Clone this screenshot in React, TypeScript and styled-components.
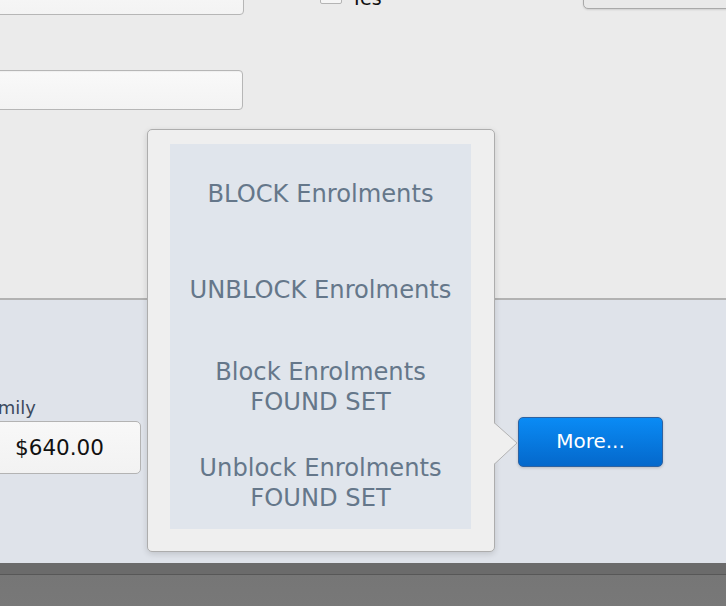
import React from "react";
import styled, { createGlobalStyle } from "styled-components";

const Global = createGlobalStyle`
  html, body { margin: 0; padding: 0; overflow: hidden; }
  body { font-family: "DejaVu Sans", Verdana, sans-serif; }
`;

const Page = styled.div`
  position: relative;
  width: 726px;
  height: 606px;
  display: flex;
  flex-direction: column;
  overflow: hidden;
`;

const TopSection = styled.section`
  height: 298px;
  flex: none;
  background: #ebebeb;
  border-bottom: 2px solid #b2b2b2;
  box-sizing: content-box;
  display: flex;
  flex-direction: column;
`;

const FieldRow = styled.div`
  display: flex;
  align-items: flex-end;
  height: 45px;
  margin-top: -30px;
`;

const TextField = styled.div<{ $width: number; $height: number; $offset?: number }>`
  box-sizing: border-box;
  width: ${(p) => p.$width}px;
  height: ${(p) => p.$height}px;
  margin-left: ${(p) => p.$offset ?? 0}px;
  flex: none;
  background: linear-gradient(#f9f9f9, #f3f3f3);
  border: 1px solid #b6b6b6;
  border-radius: 4px;
  box-shadow: inset 0 1px 1px rgba(0, 0, 0, 0.04);
`;

const CheckGroup = styled.label`
  display: flex;
  align-items: flex-end;
  gap: 9px;
  margin-left: 76px;
  margin-bottom: 11px;
`;

const CheckBox = styled.span`
  box-sizing: border-box;
  width: 22px;
  height: 22px;
  border: 1px solid #b4b4b4;
  border-radius: 2px;
  background: #f5f5f5;
`;

const CheckText = styled.span`
  font-size: 19px;
  line-height: 22px;
  color: #111;
  margin-bottom: -5px;
`;

const SideBox = styled.div`
  box-sizing: border-box;
  width: 160px;
  height: 40px;
  margin-left: auto;
  margin-right: -17px;
  margin-bottom: 6px;
  background: #e9e9e9;
  border: 1px solid #a9a9a9;
  border-radius: 5px;
  box-shadow: 0 1px 2px rgba(0, 0, 0, 0.12);
`;

const SecondField = styled(TextField)`
  margin-top: 55px;
`;

const BottomSection = styled.section`
  flex: 1;
  background: #dfe3ea;
  display: flex;
  align-items: flex-start;
  padding-top: 97px;
  box-sizing: border-box;
`;

const FieldColumn = styled.div`
  display: flex;
  flex-direction: column;
  gap: 2px;
  margin-left: -22px;
  width: 163px;
  flex: none;
`;

const FieldLabel = styled.span`
  font-size: 18px;
  line-height: 22px;
  color: #3c4a5e;
  white-space: nowrap;
`;

const MoneyField = styled.div`
  box-sizing: border-box;
  height: 53px;
  display: flex;
  align-items: center;
  justify-content: center;
  background: linear-gradient(#f8f8f8, #f2f2f2);
  border: 1px solid #b3b3b3;
  border-radius: 5px;
  font-size: 21.5px;
  color: #111;
`;

const MoreButton = styled.button`
  box-sizing: border-box;
  width: 145px;
  height: 50px;
  margin-top: 20px;
  margin-left: 377px;
  flex: none;
  border: 1px solid #2f62a0;
  border-radius: 5px;
  background: linear-gradient(#0a8bf5, #0468cb);
  color: #fff;
  font-family: "DejaVu Sans", Verdana, sans-serif;
  font-size: 20px;
  padding: 0 0 2px;
  box-shadow: 0 1px 3px rgba(0, 0, 0, 0.18);
  cursor: pointer;
`;

const Footer = styled.footer`
  height: 43px;
  flex: none;
  background: linear-gradient(
    to bottom,
    #6b6b6b 0,
    #6b6b6b 11px,
    #575757 11px,
    #575757 12px,
    #767676 12px,
    #787878 100%
  );
`;

const Popover = styled.div`
  position: absolute;
  left: 147px;
  top: 129px;
  width: 348px;
  height: 423px;
  box-sizing: border-box;
  padding: 14px 23px 22px 22px;
  background: #efefef;
  border: 1px solid #adadad;
  border-radius: 5px;
  box-shadow: 0 2px 6px rgba(0, 0, 0, 0.14);
`;

const MenuList = styled.div`
  height: 100%;
  background: #e0e5ec;
  display: grid;
  grid-template-rows: repeat(4, 1fr);
`;

const MenuItem = styled.div`
  display: flex;
  align-items: center;
  justify-content: center;
  text-align: center;
  padding-top: 4px;
  font-size: 24.2px;
  line-height: 30px;
  color: #65778a;
  cursor: pointer;
`;

const Arrow = styled.svg`
  position: absolute;
  left: 345px;
  top: 292px;
  overflow: visible;
`;

export default function App() {
  return (
    <>
      <Global />
      <Page>
        <TopSection>
          <FieldRow>
            <TextField $width={254} $height={40} $offset={-10} />
            <CheckGroup>
              <CheckBox />
              <CheckText>Yes</CheckText>
            </CheckGroup>
            <SideBox />
          </FieldRow>
          <SecondField $width={253} $height={40} $offset={-10} />
        </TopSection>
        <BottomSection>
          <FieldColumn>
            <FieldLabel>Family</FieldLabel>
            <MoneyField>$640.00</MoneyField>
          </FieldColumn>
          <MoreButton>More...</MoreButton>
        </BottomSection>
        <Footer />
        <Popover>
          <MenuList>
            <MenuItem>BLOCK Enrolments</MenuItem>
            <MenuItem>UNBLOCK Enrolments</MenuItem>
            <MenuItem>
              Block Enrolments
              <br />
              FOUND SET
            </MenuItem>
            <MenuItem>
              Unblock Enrolments
              <br />
              FOUND SET
            </MenuItem>
          </MenuList>
          <Arrow width="26" height="44" viewBox="0 0 26 44">
            <path d="M0 0 L24 21 L0 43 Z" fill="#efefef" />
            <path d="M1 0.5 L24 21 L1 42.5" fill="none" stroke="#b4b4b4" strokeWidth="1" />
          </Arrow>
        </Popover>
      </Page>
    </>
  );
}
